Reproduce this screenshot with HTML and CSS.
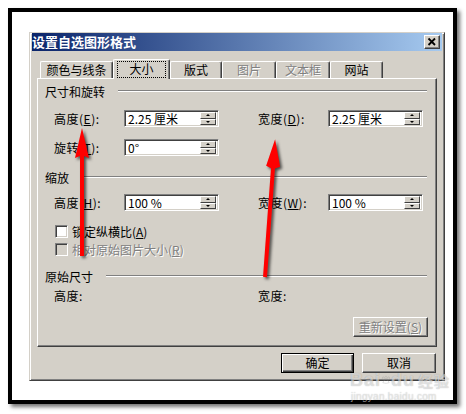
FILE: index.html
```html
<!DOCTYPE html>
<html lang="zh-CN">
<head>
  <meta charset="UTF-8">
  <meta name="viewport" content="width=device-width, initial-scale=1.0">
  <title>设置自选图形格式</title>
  <link rel="stylesheet" href="styles.css">
</head>
<body>

  <div class="frame">
    <div class="dialog">
      <div class="titlebar">
        <span class="title">设置自选图形格式</span>
        <span class="close_btn">
          <svg width="14" height="12" viewBox="0 0 14 12">
            <path d="M3.5 2.5 L10 9 M10 2.5 L3.5 9" stroke="#000" stroke-width="1.8" fill="none"/>
          </svg>
        </span>
      </div>

      <div class="tabs">
        <div class="tab" style="width:73px">颜色与线条</div>
        <div class="tab tab_active" style="width:57px"><span class="focus">大小</span></div>
        <div class="tab" style="width:52px">版式</div>
        <div class="tab disabled" style="width:54px">图片</div>
        <div class="tab disabled" style="width:54px">文本框</div>
        <div class="tab" style="width:53px">网站</div>
      </div>

      <div class="panel">
        <div class="section"><span>尺寸和旋转</span><i class="line"></i></div>

        <div class="field_row row_height">
          <label>高度(<u>E</u>):</label>
          <div class="spin"><span>2.25 厘米</span><div class="spin_btns"><b class="up"></b><b class="down"></b></div></div>
          <span></span>
          <label>宽度(<u>D</u>):</label>
          <div class="spin"><span>2.25 厘米</span><div class="spin_btns"><b class="up"></b><b class="down"></b></div></div>
        </div>

        <div class="field_row row_rotate">
          <label>旋转(<u>T</u>):</label>
          <div class="spin"><span>0°</span><div class="spin_btns"><b class="up"></b><b class="down"></b></div></div>
        </div>

        <div class="section section_scale"><span>缩放</span><i class="line"></i></div>

        <div class="field_row row_scale">
          <label>高度(<u>H</u>):</label>
          <div class="spin"><span>100 %</span><div class="spin_btns"><b class="up"></b><b class="down"></b></div></div>
          <span></span>
          <label>宽度(<u>W</u>):</label>
          <div class="spin"><span>100 %</span><div class="spin_btns"><b class="up"></b><b class="down"></b></div></div>
        </div>

        <div class="check_row check_lock">
          <span class="box"></span><span>锁定纵横比(<u>A</u>)</span>
        </div>
        <div class="check_row check_relative disabled">
          <span class="box"></span><span>相对原始图片大小(<u>R</u>)</span>
        </div>

        <div class="section section_orig"><span>原始尺寸</span><i class="line"></i></div>

        <div class="field_row row_orig">
          <label>高度:</label>
          <span></span>
          <span></span>
          <label>宽度:</label>
        </div>

        <div class="reset_row">
          <div class="btn btn_reset disabled">重新设置(<u>S</u>)</div>
        </div>
      </div>

      <div class="dialog_buttons">
        <div class="btn btn_default">确定</div>
        <div class="btn btn_cancel">取消</div>
      </div>
    </div>

    <div class="watermark">
      <div class="wm_logo">Bai<svg width="22" height="18" viewBox="0 0 22 18">
        <g fill="none" stroke="rgba(150,150,150,.45)" stroke-width="1.4">
          <ellipse cx="5" cy="5" rx="2.2" ry="3"/>
          <ellipse cx="11" cy="3.5" rx="2.2" ry="3"/>
          <ellipse cx="17" cy="5" rx="2.2" ry="3"/>
          <path d="M4 15 Q6 8 11 8 Q16 8 18 15 Q11 18 4 15 Z"/>
        </g>
      </svg>du<span class="wm_cn">经验</span></div>
      <div class="wm_url">jingyan.baidu.com</div>
    </div>
  </div>

  <svg class="arrows" width="466" height="414" viewBox="0 0 466 414">
    <polygon fill="#f00" points="80,256 84,256 84,156 89,158 82,128 75,158 80,156"/>
    <g transform="translate(265,277) rotate(4.2)">
      <polygon fill="#f00" points="-2,0 2,0 2,-109 7,-111 0,-138 -7,-111 -2,-109"/>
    </g>
  </svg>

</body>
</html>
```

FILE: styles.css
```css
body {
  margin: 0;
  background: #fff;
  font-family: "Noto Sans CJK SC", "Liberation Sans", sans-serif;
  font-size: 12px;
  color: #000;
  position: relative;
}

u {
  text-decoration: underline;
}

.frame {
  position: relative;
  margin: 8px;
  width: 449px;
  height: 396px;
  box-sizing: border-box;
  border: 4px solid #000;
  box-shadow: 3px 3px 4px rgba(0, 0, 0, 0.55);
  padding: 20px 0 0 17px;
  background: #fff;
}

.dialog {
  width: 416px;
  height: 349px;
  box-sizing: border-box;
  background: #d4d0c8;
  border: 1px solid;
  border-color: #d4d0c8 #404040 #404040 #d4d0c8;
  box-shadow: inset 1px 1px #fff, inset -1px -1px #808080;
  padding: 0 2px;
}

.titlebar {
  height: 18px;
  display: flex;
  align-items: center;
  justify-content: space-between;
  background: linear-gradient(to right, #0a246a, #a6caf0);
}

.title {
  color: #fff;
  font-weight: bold;
  font-size: 13px;
  line-height: 18px;
}

.close_btn {
  width: 16px;
  height: 14px;
  box-sizing: border-box;
  margin-right: 2px;
  background: #d4d0c8;
  border: 1px solid;
  border-color: #fff #404040 #404040 #fff;
  box-shadow: inset -1px -1px #808080;
  display: flex;
}

/* tabs */
.tabs {
  margin-top: 8px;
  padding-left: 8px;
  height: 19px;
  display: flex;
  align-items: flex-end;
  position: relative;
  z-index: 1;
}

.tab {
  height: 17px;
  box-sizing: border-box;
  border-top: 1px solid #fff;
  border-left: 1px solid #fff;
  border-right: 1px solid #404040;
  box-shadow: inset -1px 0 #808080;
  border-radius: 2px 2px 0 0;
  background: #d4d0c8;
  display: flex;
  align-items: center;
  justify-content: center;
  line-height: 14px;
}

.tab_active {
  height: 20px;
  margin-bottom: -1px;
}

.focus {
  display: flex;
  align-items: center;
  justify-content: center;
  width: 47px;
  height: 15px;
  margin-top: -1px;
  outline: 1px dotted #000;
}

.disabled {
  color: #808080;
  text-shadow: 1px 1px 0 #fff;
}

/* panel */
.panel {
  margin-left: 5px;
  width: 400px;
  height: 269px;
  box-sizing: border-box;
  border: 1px solid;
  border-color: #fff #404040 #404040 #fff;
  box-shadow: inset -1px -1px #808080;
  padding-top: 5px;
}

.section {
  display: flex;
  align-items: center;
  height: 14px;
  padding-left: 7px;
  padding-right: 9px;
}

.section .line {
  flex: 1;
  margin-left: 13px;
  border-top: 1px solid #808080;
  border-bottom: 1px solid #fff;
}

.section_scale {
  margin-top: 14px;
}

.section_orig {
  margin-top: 13px;
}

.field_row {
  display: grid;
  grid-template-columns: 70px 95px 39px 70px 95px;
  align-items: center;
  height: 17px;
  padding-left: 16px;
}

.field_row label {
  line-height: 14px;
  white-space: nowrap;
  letter-spacing: 0.5px;
}

.row_height {
  margin-top: 12px;
}

.row_rotate {
  margin-top: 12px;
}

.row_scale {
  margin-top: 10px;
}

.row_orig {
  margin-top: 6px;
  height: 14px;
}

.spin {
  height: 17px;
  box-sizing: border-box;
  border: 1px solid;
  border-color: #808080 #fff #fff #808080;
  box-shadow: inset 1px 1px #404040, inset -1px -1px #d4d0c8;
  background: #fff;
  display: flex;
  align-items: center;
  justify-content: space-between;
  padding: 1px;
}

.spin span {
  padding-left: 2px;
  line-height: 13px;
  white-space: pre;
}

.spin_btns {
  width: 16px;
  height: 13px;
  display: flex;
  flex-direction: column;
  margin-right: 1px;
}

.spin_btns b {
  flex: 1;
  box-sizing: border-box;
  background: #d4d0c8;
  border: 1px solid;
  border-color: #fff #404040 #404040 #fff;
  display: flex;
  align-items: center;
  justify-content: center;
}

.spin_btns b::after {
  content: "";
  width: 0;
  height: 0;
  border-left: 2px solid transparent;
  border-right: 2px solid transparent;
}

.spin_btns .up::after {
  border-bottom: 2px solid #000;
}

.spin_btns .down::after {
  border-top: 2px solid #000;
}

/* checkboxes */
.check_row {
  display: flex;
  align-items: center;
  height: 13px;
  padding-left: 17px;
  line-height: 13px;
}

.check_row .box {
  width: 13px;
  height: 13px;
  box-sizing: border-box;
  margin-right: 4px;
  border: 1px solid;
  border-color: #808080 #fff #fff #808080;
  box-shadow: inset 1px 1px #404040, inset -1px -1px #d4d0c8;
  background: #fff;
}

.check_row.disabled .box {
  background: #d4d0c8;
}

.check_lock {
  margin-top: 14px;
}

.check_relative {
  margin-top: 5px;
}

/* buttons */
.btn {
  height: 20px;
  box-sizing: border-box;
  background: #d4d0c8;
  border: 1px solid;
  border-color: #fff #404040 #404040 #fff;
  box-shadow: inset -1px -1px #808080;
  display: flex;
  align-items: center;
  justify-content: center;
  line-height: 14px;
}

.reset_row {
  display: flex;
  justify-content: flex-end;
  padding-right: 8px;
  margin-top: 14px;
}

.btn_reset {
  width: 75px;
}

.dialog_buttons {
  display: flex;
  justify-content: flex-end;
  gap: 8px;
  margin-top: 6px;
  padding-right: 6px;
}

.btn_default {
  width: 73px;
  border: 1px solid #000;
  box-shadow: inset 1px 1px #fff, inset -1px -1px #404040, inset -2px -2px #808080;
}

.btn_cancel {
  width: 74px;
}

/* watermark */
.watermark {
  position: absolute;
  left: 338px;
  top: 359px;
  width: 100px;
  white-space: nowrap;
  color: rgba(255, 255, 255, 0.55);
  text-shadow: 0 0 1px rgba(0, 0, 0, 0.3);
  pointer-events: none;
}

.wm_logo {
  display: flex;
  align-items: center;
  font-family: "Liberation Sans", sans-serif;
  font-weight: bold;
  font-size: 18px;
  line-height: 17px;
  letter-spacing: 1px;
}

.wm_cn {
  font-family: "Noto Sans CJK SC", sans-serif;
  font-size: 15px;
  margin-left: 3px;
}

.wm_url {
  font-family: "Liberation Sans", sans-serif;
  font-size: 10px;
  line-height: 11px;
  margin-top: 2px;
  margin-left: 1px;
  letter-spacing: 0.3px;
}

.arrows {
  position: absolute;
  left: 0;
  top: 0;
  pointer-events: none;
  filter: drop-shadow(2px 2px 1.5px rgba(0, 0, 0, 0.65));
}
```
